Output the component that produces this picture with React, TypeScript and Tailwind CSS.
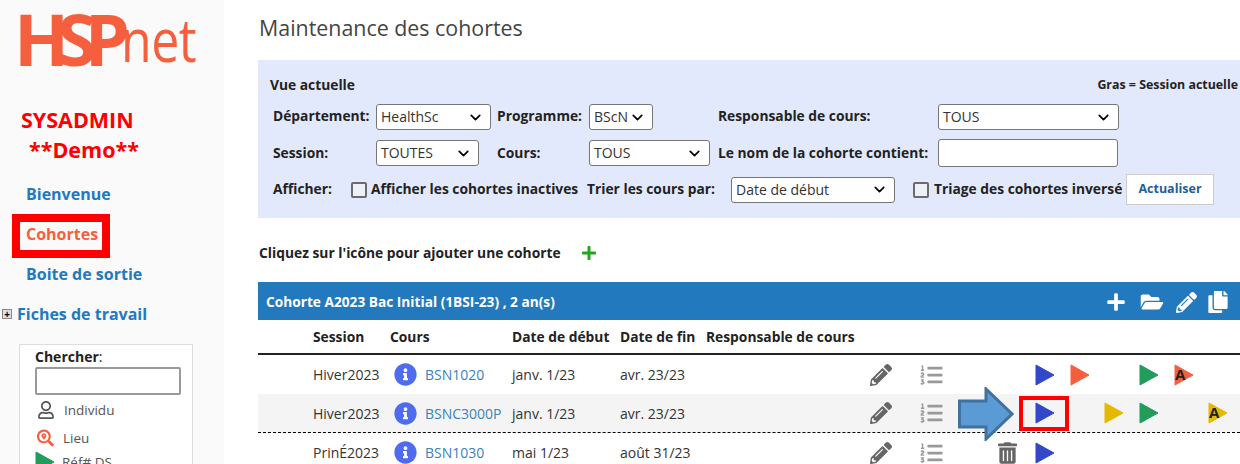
import { ChevronDown } from "lucide-react";
import { FaCopy, FaFolderOpen, FaInfoCircle, FaListOl, FaPencilAlt, FaPlus, FaRegUser, FaSearchLocation, FaTrashAlt } from "react-icons/fa";

const rowGrid =
  "grid grid-cols-[55px_77px_122px_108px_86px_164px_50px_78px_37px_35px_34px_35px_35px_34px_1fr] items-center";

function Select({ value, className }: { value: string; className: string }) {
  return (
    <div className={`flex h-[26px] items-center justify-between rounded-[3px] border border-[#767676] bg-white pl-1 pr-[6px] text-[14px] font-normal leading-none text-[#333] ${className}`}>
      <span>{value}</span>
      <ChevronDown className="h-[17px] w-[17px] shrink-0 text-black" strokeWidth={2.4} />
    </div>
  );
}

function Checkbox({ className }: { className: string }) {
  return <span className={`block h-4 w-4 shrink-0 rounded-[2px] border-2 border-[#6b6b6b] bg-[#eef0f8] ${className}`} />;
}

function Play({ color, letter }: { color: string; letter?: boolean }) {
  return (
    <svg viewBox="0 0 20 24" className="block h-6 w-5">
      <path d="M1 2 L19 12 L1 22 Z" fill={color} stroke={color} strokeLinejoin="round" />
      {letter && (
        <text x="1" y="17" fontFamily="Open Sans" fontWeight="700" fontSize="15" fill="#222">
          A
        </text>
      )}
    </svg>
  );
}

function Cours({ code }: { code: string }) {
  return (
    <div className="flex items-center">
      <FaInfoCircle className="mr-[8px] ml-[4px] h-[23px] w-[23px] text-[#4f6bf0]" />
      <a className="text-[14px] text-[#3b82bd]">{code}</a>
    </div>
  );
}

function Row({
  session,
  code,
  debut,
  fin,
  icons,
  className,
}: {
  session: string;
  code: string;
  debut: string;
  fin: string;
  icons: React.ReactNode;
  className: string;
}) {
  return (
    <div className={`${rowGrid} text-[14px] text-[#333] ${className}`}>
      <span />
      <span>{session}</span>
      <Cours code={code} />
      <span>{debut}</span>
      <span className="col-span-2">{fin}</span>
      <FaPencilAlt className="h-[22px] w-[22px] text-[#666]" />
      <FaListOl className="h-[22px] w-[23px] text-[#999]" />
      {icons}
    </div>
  );
}

export default function App() {
  return (
    <div className="flex h-[464px] w-[1240px] overflow-hidden bg-white font-['Open_Sans',sans-serif]">
      <aside className="relative w-[224px] shrink-0 bg-[#fafafa]">
        <div className="ml-[14px] flex h-[76px] items-baseline whitespace-nowrap leading-[76px] text-[#f55f3e]">
          <span className="text-[72px] font-bold tracking-[-12px]">HSP</span>
          <span className="ml-[3px] origin-bottom scale-y-[1.2] text-[50px] font-normal tracking-[-0.5px]">net</span>
        </div>
        <div className="ml-[21px] mt-[29px] text-[21.5px] font-bold leading-[30px] text-[#f00]">
          <div>SYSADMIN</div>
          <div className="ml-[8px]">**Demo**</div>
        </div>
        <nav className="mt-[9px] text-[16px] font-bold leading-[40px] text-[#2279bd]">
          <div className="pl-[26px]">Bienvenue</div>
          <div className="pl-[26px] text-[#f55f3e]">Cohortes</div>
          <div className="pl-[26px]">Boite de sortie</div>
          <div className="flex items-center pl-[2px]">
            <span className="mr-[5px] flex h-[10px] w-[10px] items-center justify-center border border-[#888] bg-[#dde] text-[10px] font-bold leading-none text-black">+</span>
            Fiches de travail
          </div>
        </nav>
        <div className="ml-[19px] mt-[10px] h-[140px] w-[174px] border border-[#ddd] bg-white pl-[15px] pr-[11px] pt-[2px]">
          <div className="text-[14px] leading-[20px] text-[#222]">
            <b>Chercher</b>:
          </div>
          <div className="h-[28px] rounded-[2px] border-2 border-[#999] bg-white" />
          <div className="mt-[3px] flex h-[24px] items-center gap-[9px] pl-[2px] text-[13.5px] text-[#555]">
            <FaRegUser className="h-[18px] w-[18px] text-[#555]" />
            Individu
          </div>
          <div className="mt-[4px] flex h-[24px] items-center gap-[9px] pl-[2px] text-[13.5px] text-[#555]">
            <FaSearchLocation className="h-[18px] w-[17px] text-[#f55f3e]" />
            Lieu
          </div>
          <div className="flex h-[24px] items-center gap-[7px] text-[13.5px] text-[#555]">
            <Play color="#219c5b" />
            Réf# DS
          </div>
        </div>
        <div className="absolute left-[12px] top-[214px] h-[44px] w-[98px] border-[8px] border-[#f00]" />
      </aside>

      <main className="relative min-w-0 flex-1 pl-[34px]">
        <h1 className="pl-[1px] pt-[13px] text-[21.4px] font-normal leading-[30px] text-[#444]">Maintenance des cohortes</h1>
        <section className="mt-[17px] h-[158px] w-[982px] bg-[#e3e9fc] pl-[12px] pr-[2px] pt-[15px] text-[13.8px] font-bold text-[#222]">
          <div className="flex h-[21px] items-center justify-between">
            <span>Vue actuelle</span>
            <span className="text-[12.4px]">Gras = Session actuelle</span>
          </div>
          <div className="ml-[3px] mt-[8px] flex h-[26px] items-center">
            <span className="mb-[1px] w-[103px]">Département:</span>
            <Select value="HealthSc" className="w-[115px]" />
            <span className="mb-[1px] ml-[6px] w-[92px]">Programme:</span>
            <Select value="BScN" className="w-[64px]" />
            <span className="mb-[1px] ml-[65px] w-[220px]">Responsable de cours:</span>
            <Select value="TOUS" className="w-[181px]" />
          </div>
          <div className="ml-[3px] mt-[9px] flex h-[28px] items-center">
            <span className="w-[103px]">Session:</span>
            <Select value="TOUTES" className="w-[103px]" />
            <span className="ml-[18px] w-[92px]">Cours:</span>
            <Select value="TOUS" className="w-[121px]" />
            <span className="ml-[8px] w-[220px]">Le nom de la cohorte contient:</span>
            <div className="h-[28px] w-[180px] rounded-[3px] border border-[#767676] bg-white" />
          </div>
          <div className="ml-[3px] mt-[7px] flex h-[31px] items-center">
            <span className="w-[78px]">Afficher:</span>
            <Checkbox className="" />
            <span className="ml-[4px] w-[216px]">Afficher les cohortes inactives</span>
            <span className="w-[144px]">Trier les cours par:</span>
            <Select value="Date de début" className="w-[164px]" />
            <Checkbox className="ml-[18px]" />
            <span className="ml-[5px] w-[192px]">Triage des cohortes inversé</span>
            <button type="button" className="h-[31px] w-[88px] border border-[#ccc] bg-white text-[12.5px] font-bold text-[#1f5f95]">
              Actualiser
            </button>
          </div>
        </section>

        <div className="ml-[1px] mt-[22px] flex h-[26px] items-center text-[13.8px] font-bold text-[#222]">
          <span className="w-[322px] whitespace-nowrap">Cliquez sur l'icône pour ajouter une cohorte</span>
          <FaPlus className="h-4 w-4 text-[#22a722]" />
        </div>

        <div className="mt-[16px] flex h-[38px] w-[982px] items-center justify-between bg-[#2279bd] pl-[8px] pr-[12px] pt-[2px] text-[13.7px] font-bold text-white">
          <span>Cohorte A2023 Bac Initial (1BSI-23) , 2 an(s)</span>
          <div className="flex items-center gap-[11px]">
            <FaPlus className="mr-[2px] h-5 w-5" />
            <FaFolderOpen className="h-5 w-[26px]" />
            <FaPencilAlt className="h-[21px] w-[21px]" />
            <FaCopy className="h-[22px] w-[20px]" />
          </div>
        </div>

        <div className={`${rowGrid} h-[35px] w-[982px] border-b-2 border-[#222] pt-[2px] text-[13.8px] font-bold text-[#222]`}>
          <span />
          <span>Session</span>
          <span>Cours</span>
          <span>Date de début</span>
          <span>Date de fin</span>
          <span className="col-span-3 whitespace-nowrap">Responsable de cours</span>
        </div>

        <Row
          session="Hiver2023"
          code="BSN1020"
          debut="janv. 1/23"
          fin="avr. 23/23"
          className="h-[39px] w-[982px]"
          icons={
            <>
              <span />
              <Play color="#3347c9" />
              <Play color="#f55f3e" />
              <span />
              <Play color="#219c5b" />
              <Play color="#f55f3e" letter />
            </>
          }
        />
        <Row
          session="Hiver2023"
          code="BSNC3000P"
          debut="janv. 1/23"
          fin="avr. 23/23"
          className="h-[39px] w-[982px] border-b border-dashed border-black bg-[#f4f4f4]"
          icons={
            <>
              <span />
              <Play color="#3347c9" />
              <span />
              <Play color="#e6b800" />
              <Play color="#219c5b" />
              <span />
              <Play color="#e6b800" letter />
            </>
          }
        />
        <Row
          session="PrinÉ2023"
          code="BSN1030"
          debut="mai 1/23"
          fin="août 31/23"
          className="h-[39px] w-[982px]"
          icons={
            <>
              <FaTrashAlt className="h-[22px] w-[19px] text-[#666]" />
              <Play color="#3347c9" />
            </>
          }
        />

        {/* annotations laid over the table */}
        <div className="absolute left-[795px] top-[396px] h-[35px] w-[50px] border-[4px] border-[#f00]" />
        <svg viewBox="0 0 56 54" className="absolute left-[734px] top-[387px] h-[54px] w-[56px]">
          <path d="M1.5 14 H28 V2 L54 27 L28 52 V40 H1.5 Z" fill="#5b9bd5" stroke="#41719c" strokeWidth="3" />
        </svg>
      </main>
    </div>
  );
}
